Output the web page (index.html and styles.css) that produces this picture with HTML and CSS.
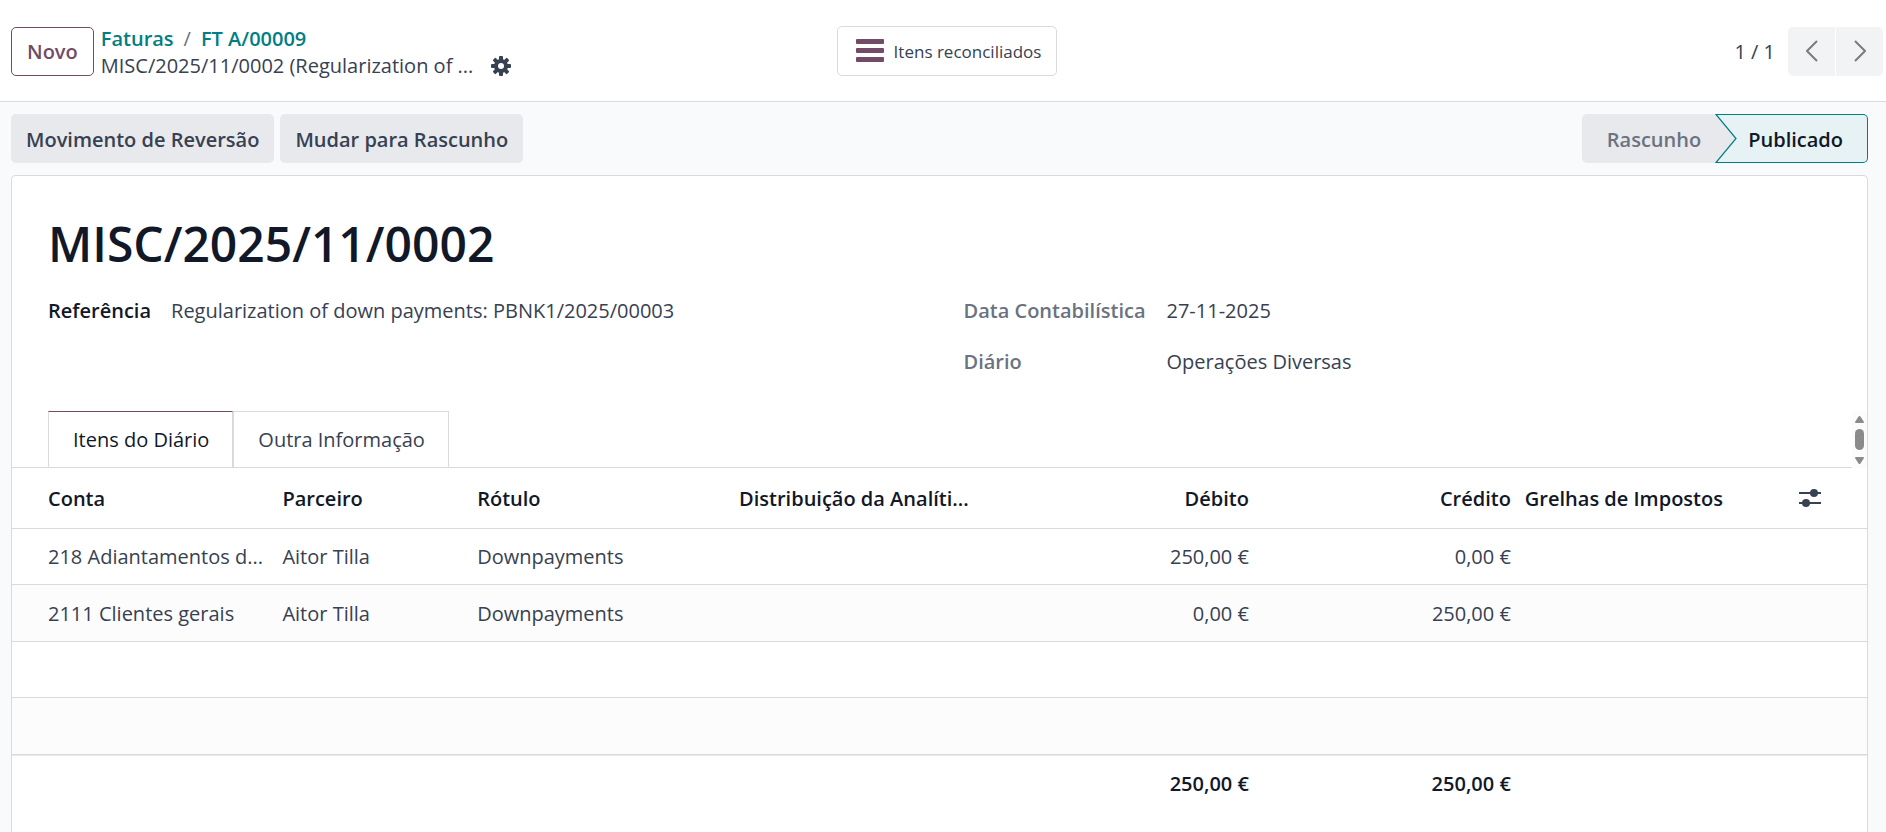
FILE: index.html
```html
<!DOCTYPE html>
<html lang="pt">
<head>
  <meta charset="UTF-8">
  <title>MISC/2025/11/0002</title>
  <link rel="stylesheet" href="styles.css">
</head>
<body>
  <header class="control-panel">
    <div class="cp-left">
      <button class="btn btn-outline">Novo</button>
      <div class="breadcrumb">
        <nav class="crumbs">
          <a href="#">Faturas</a>
          <span class="sep">/</span>
          <a href="#">FT A/00009</a>
        </nav>
        <div class="crumb-current">
          <span class="crumb-title">MISC/2025/11/0002 (Regularization of ...</span>
          <button class="icon-btn" aria-label="Ações">
            <svg width="20" height="20" viewBox="0 0 20 20">
              <g fill="#374151">
                <circle cx="10" cy="10" r="7"/>
                <rect x="8" y="0" width="4" height="20" rx="1"/>
                <rect x="8" y="0" width="4" height="20" rx="1" transform="rotate(45 10 10)"/>
                <rect x="8" y="0" width="4" height="20" rx="1" transform="rotate(90 10 10)"/>
                <rect x="8" y="0" width="4" height="20" rx="1" transform="rotate(135 10 10)"/>
              </g>
              <circle cx="10" cy="10" r="3" fill="#fff"/>
            </svg>
          </button>
        </div>
      </div>
    </div>

    <button class="stat-button">
      <svg width="28" height="24" viewBox="0 0 28 24" fill="#714b67">
        <rect y="0" width="28" height="5" rx="1"/>
        <rect y="9" width="28" height="5" rx="1"/>
        <rect y="18" width="28" height="5" rx="1"/>
      </svg>
      Itens reconciliados
    </button>

    <div class="pager">
      <span class="pager-count">1 / 1</span>
      <div class="pager-buttons">
        <button aria-label="Anterior">
          <svg width="12" height="22" viewBox="0 0 12 22"><path d="M11 1 L1 11 L11 21" fill="none" stroke="#7c7c7c" stroke-width="2"/></svg>
        </button>
        <button aria-label="Seguinte">
          <svg width="12" height="22" viewBox="0 0 12 22"><path d="M1 1 L11 11 L1 21" fill="none" stroke="#7c7c7c" stroke-width="2"/></svg>
        </button>
      </div>
    </div>
  </header>

  <main class="form-view">
    <div class="statusbar">
      <div class="statusbar-buttons">
        <button class="btn">Movimento de Reversão</button>
        <button class="btn">Mudar para Rascunho</button>
      </div>
      <div class="status">
        <button class="status-step">Rascunho</button>
        <svg class="status-arrow" width="22" height="49" viewBox="0 0 22 49">
          <rect width="22" height="49" fill="#e7e9ed"/>
          <path d="M1 0.5 H22 V48.5 H1 L21 24.5 Z" fill="#e6f2f3"/>
          <path d="M22 0.5 H1 L21 24.5 L1 48.5 H22" fill="none" stroke="#017e84" stroke-width="1.2"/>
        </svg>
        <button class="status-step active">Publicado</button>
      </div>
    </div>

    <section class="sheet">
      <h1>MISC/2025/11/0002</h1>

      <div class="fields">
        <dl class="group group-left">
          <dt>Referência</dt>
          <dd>Regularization of down payments: PBNK1/2025/00003</dd>
        </dl>
        <dl class="group group-right">
          <dt>Data Contabilística</dt>
          <dd>27-11-2025</dd>
          <dt>Diário</dt>
          <dd>Operações Diversas</dd>
        </dl>
      </div>

      <div class="notebook">
        <div class="tabs" role="tablist">
          <button class="tab active" role="tab">Itens do Diário</button>
          <button class="tab" role="tab">Outra Informação</button>
        </div>
        <div class="scroller">
          <svg width="15" height="57" viewBox="0 0 15 57" fill="#8b8b8b">
            <path d="M6.5 5.5 Q7.5 4.5 8.5 5.5 L12 11 Q12 12 11 12 H4 Q3 12 3 11 Z"/>
            <rect x="3" y="18" width="9" height="21" rx="4.5"/>
            <path d="M6.5 52.5 Q7.5 53.5 8.5 52.5 L12 47 Q12 46 11 46 H4 Q3 46 3 47 Z"/>
          </svg>
        </div>
      </div>

      <table class="lines">
        <colgroup>
          <col class="col-account">
          <col class="col-partner">
          <col class="col-wide">
          <col class="col-wide">
          <col class="col-wide">
          <col class="col-wide">
          <col class="col-wide">
          <col>
        </colgroup>
        <thead>
          <tr>
            <th>Conta</th>
            <th>Parceiro</th>
            <th>Rótulo</th>
            <th>Distribuição da Analíti...</th>
            <th class="num">Débito</th>
            <th class="num">Crédito</th>
            <th>Grelhas de Impostos</th>
            <th class="options">
              <button class="icon-btn" aria-label="Colunas opcionais">
                <svg width="22" height="20" viewBox="0 0 22 20" fill="#374151">
                  <rect y="4" width="22" height="2"/>
                  <circle cx="15" cy="5" r="4"/>
                  <rect y="14" width="22" height="2"/>
                  <circle cx="7" cy="15" r="4"/>
                </svg>
              </button>
            </th>
          </tr>
        </thead>
        <tbody>
          <tr>
            <td>218 Adiantamentos d...</td>
            <td>Aitor Tilla</td>
            <td>Downpayments</td>
            <td></td>
            <td class="num">250,00 €</td>
            <td class="num">0,00 €</td>
            <td></td>
            <td></td>
          </tr>
          <tr>
            <td>2111 Clientes gerais</td>
            <td>Aitor Tilla</td>
            <td>Downpayments</td>
            <td></td>
            <td class="num">0,00 €</td>
            <td class="num">250,00 €</td>
            <td></td>
            <td></td>
          </tr>
          <tr><td colspan="8"></td></tr>
          <tr><td colspan="8"></td></tr>
        </tbody>
        <tfoot>
          <tr>
            <td colspan="4"></td>
            <td class="num">250,00 €</td>
            <td class="num">250,00 €</td>
            <td colspan="2"></td>
          </tr>
        </tfoot>
      </table>
    </section>
  </main>
</body>
</html>
```

FILE: styles.css
```css
* {
  box-sizing: border-box;
}

body {
  margin: 0;
  height: 100vh;
  display: flex;
  flex-direction: column;
  overflow: hidden;
  font-family: "Segoe UI", "Open Sans", sans-serif;
  font-size: 20px;
  line-height: 27px;
  color: #374151;
  background: #f9fafb;
}

button {
  font: inherit;
  color: inherit;
  border: none;
  background: none;
  padding: 0;
  cursor: pointer;
}

svg {
  display: block;
  flex: none;
}

.btn {
  height: 49px;
  padding: 1px 15px 0;
  border-radius: 5px;
  background: #e7e9ed;
  font-weight: 600;
}

.btn-outline {
  border: 1px solid #714b67;
  background: #fff;
  color: #714b67;
}

/* top bar */
.control-panel {
  display: grid;
  grid-template-columns: 1fr auto 1fr;
  align-items: center;
  height: 102px;
  padding: 1px 3px 0 11px;
  background: #fff;
  border-bottom: 1px solid #d8dadd;
}

.cp-left {
  display: flex;
  align-items: center;
  gap: 7px;
}

.breadcrumb {
  padding-top: 2px;
}

.crumbs {
  display: flex;
  gap: 10px;
}

.crumbs a {
  color: #017e84;
  font-weight: 600;
  text-decoration: none;
}

.sep {
  color: #6b7280;
}

.crumb-current {
  display: flex;
  align-items: center;
  gap: 18px;
}

.stat-button {
  display: flex;
  align-items: center;
  gap: 10px;
  height: 50px;
  padding: 0 15px 0 18px;
  border: 1px solid #d8dadd;
  border-radius: 5px;
  font-size: 17px;
}

.pager {
  display: flex;
  align-items: center;
  justify-content: flex-end;
  gap: 13px;
}

.pager-buttons {
  display: flex;
  gap: 1px;
}

.pager-buttons button {
  display: flex;
  align-items: center;
  justify-content: center;
  width: 47px;
  height: 49px;
  background: #f2f3f5;
}

.pager-buttons button:first-child {
  border-radius: 5px 0 0 5px;
}

.pager-buttons button:last-child {
  border-radius: 0 5px 5px 0;
}

/* form */
.form-view {
  flex: 1;
  display: flex;
  flex-direction: column;
  padding: 12px 18px 0 11px;
}

.statusbar {
  display: flex;
  justify-content: space-between;
  margin-bottom: 12px;
}

.statusbar-buttons {
  display: flex;
  gap: 6px;
}

.status {
  display: flex;
}

.status-step {
  height: 49px;
  padding: 1px 14px 0 25px;
  border-radius: 5px 0 0 5px;
  background: #e7e9ed;
  color: #6b7280;
  font-weight: 600;
}

.status-step.active {
  padding: 1px 24px 0 11px;
  border: 1px solid #017e84;
  border-left: none;
  border-radius: 0 5px 5px 0;
  background: #e6f2f3;
  color: #111827;
}

.sheet {
  flex: 1;
  border: 1px solid #d8dadd;
  border-bottom: none;
  border-radius: 5px 5px 0 0;
  background: #fff;
}

h1 {
  margin: 0;
  padding: 34px 36px 0;
  font-size: 48px;
  line-height: 68px;
  font-weight: 600;
  color: #111827;
}

.fields {
  display: grid;
  grid-template-columns: 1fr 1fr;
  padding: 19px 36px 0;
}

.group {
  display: grid;
  align-content: start;
  gap: 24px;
  margin: 0;
}

.group-left {
  grid-template-columns: max-content 1fr;
  column-gap: 20px;
}

.group-right {
  grid-template-columns: 179px 1fr;
  padding-left: 24px;
}

dt {
  font-weight: 600;
  color: #6b7280;
  white-space: nowrap;
}

.group-left dt {
  color: #111827;
}

dd {
  margin: 0;
}

/* notebook */
.notebook {
  display: flex;
  justify-content: space-between;
  margin-top: 36px;
}

.tabs {
  flex: 1;
  display: flex;
  padding-left: 36px;
  border-bottom: 1px solid #d8dadd;
}

.tab {
  height: 56px;
  padding: 0 23px 0 24px;
  border: 1px solid #d8dadd;
  border-bottom: none;
}

.tab.active {
  border-top-color: #714b67;
  color: #111827;
}

.scroller {
  background: #fcfcfc;
}

.lines {
  width: 100%;
  table-layout: fixed;
  border-collapse: separate;
  border-spacing: 0;
}

.col-account {
  width: 14.2%;
}

.col-wide {
  width: 14.12%;
}

.col-partner {
  width: 10.5%;
}

.lines th,
.lines td {
  height: 56px;
  padding: 0 7px;
  border-bottom: 1px solid #d8dadd;
  text-align: left;
  white-space: nowrap;
}

.lines th {
  height: 61px;
  font-weight: 600;
  color: #111827;
}

.lines th:first-child,
.lines td:first-child {
  padding-left: 36px;
}

.lines .num {
  text-align: right;
}

.lines .options {
  padding-right: 46px;
}

.options .icon-btn {
  display: block;
  margin-left: auto;
}

.lines tbody tr:nth-child(even) td {
  height: 57px;
  background: #fcfcfc;
}

.lines tfoot td {
  border-top: 1px solid #e7e9ed;
  border-bottom: none;
  font-weight: 600;
  color: #111827;
}
```
